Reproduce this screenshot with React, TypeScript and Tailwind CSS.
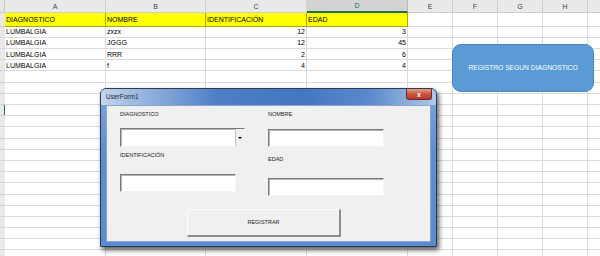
import React from "react";

const cols = [
  { key: "A", w: "w-[101px]" },
  { key: "B", w: "w-[100px]" },
  { key: "C", w: "w-[101px]" },
  { key: "D", w: "w-[101px]" },
  { key: "E", w: "w-[45px]" },
  { key: "F", w: "w-[45px]" },
  { key: "G", w: "w-[45px]" },
  { key: "H", w: "w-[45px]" },
  { key: "I", w: "w-[45px]" },
];

const data = [
  ["LUMBALGIA", "zxzx", "12", "3"],
  ["LUMBALGIA", "JGGG", "12", "45"],
  ["LUMBALGIA", "RRR", "2", "6"],
  ["LUMBALGIA", "f", "4", "4"],
];

const headings = ["DIAGNOSTICO", "NOMBRE", "IDENTIFICACIÓN", "EDAD"];

const RowHead = ({ n, h, active }: { n: number; h: string; active?: boolean }) => (
  <div className={`${h} relative w-[5px] shrink-0 overflow-hidden border-b border-[#d4d4d4] bg-[#e9e9e9]`}>
    <div className="-ml-[21px] flex h-full w-[26px] items-center justify-center text-[7px] leading-none text-[#3b4a66]">
      {n}
    </div>
    {active && <div className="absolute right-0 top-0 h-full w-[1px] bg-[#217346]" />}
  </div>
);

const Sheet = () => {
  const emptyRows = Array.from({ length: 18 }, (_, i) => i + 6);

  return (
    <div className="flex flex-col">
      {/* column headers */}
      <div className="flex h-[13px]">
        <div className="w-[5px] shrink-0 border-b border-r border-[#c8c8c8] bg-[#e6e6e6]" />
        {cols.map((c) => (
          <div
            key={c.key}
            className={`${c.w} flex shrink-0 items-center justify-center border-r text-[7px] leading-none ${
              c.key === "D"
                ? "border-b-2 border-b-[#217346] border-r-[#bdbdbd] bg-[#d3d3d3] text-[#217346]"
                : "border-b border-[#cfcfcf] bg-[#e9e9e9] text-[#444]"
            }`}
          >
            {c.key}
          </div>
        ))}
      </div>

      {/* heading row */}
      <div className="flex h-[13.7px]">
        <RowHead n={1} h="h-[13.7px]" />
        {cols.map((c, i) => (
          <div
            key={c.key}
            className={`${c.w} flex shrink-0 items-center overflow-hidden whitespace-nowrap border-b border-r pl-[1px] text-[7px] leading-none text-black ${
              i < 4 ? "border-[#a8a800] bg-[#ffff00]" : "border-[#dadada]"
            }`}
          >
            {headings[i] ?? ""}
          </div>
        ))}
      </div>

      {data.map((row, r) => (
        <div key={r} className="flex h-[11.2px]">
          <RowHead n={r + 2} h="h-[11.2px]" />
          {cols.map((c, i) => (
            <div
              key={c.key}
              className={`${c.w} flex shrink-0 items-center overflow-visible whitespace-nowrap border-b border-r border-[#dadada] px-[1px] text-[7px] leading-none text-black ${
                i === 2 || i === 3 ? "justify-end" : "justify-start"
              }`}
            >
              {row[i] ?? ""}
            </div>
          ))}
        </div>
      ))}

      {emptyRows.map((n) => (
        <div key={n} className="flex h-[11.2px]">
          <RowHead n={n} h="h-[11.2px]" active={n === 9} />
          {cols.map((c) => (
            <div key={c.key} className={`${c.w} shrink-0 border-b border-r border-[#dadada]`} />
          ))}
        </div>
      ))}
    </div>
  );
};

const Label = ({ children, className }: { children: React.ReactNode; className?: string }) => (
  <div className={`h-[7px] text-[5.5px] leading-[7px] text-[#222] ${className ?? ""}`}>{children}</div>
);

const sunken =
  "border border-t-[#7a7a7a] border-l-[#7a7a7a] border-r-[#f4f4f4] border-b-[#f4f4f4] bg-white shadow-[inset_1px_1px_0_#b4b4b4]";

const UserForm = () => (
  <div className="absolute left-[100px] top-[88px] flex h-[159px] w-[337px] flex-col rounded-t-[6px] border border-[#2c3a52] bg-[linear-gradient(180deg,#7ea6dc_0%,#5d8dd2_40%,#5a8bd1_100%)] shadow-[2px_3px_5px_rgba(0,0,0,0.65)]">
    {/* title bar */}
    <div className="flex h-[16px] shrink-0 items-center rounded-t-[5px] bg-[linear-gradient(90deg,#c5d5eb_0%,#97b5df_12%,#4d7ec6_35%,#4476c2_60%,#5a89cc_80%,#b1c9ea_100%)] pl-[5px] pr-[4px]">
      <span className="text-[6.5px] leading-none text-[#1d2633]">UserForm1</span>
      <div className="ml-auto flex h-[11px] w-[26px] items-center justify-center self-start rounded-b-[3px] border border-t-0 border-[#6b2a2a] bg-[linear-gradient(180deg,#e4a08e_0%,#c8543f_50%,#b73a28_100%)]">
        <span className="text-[7px] font-bold leading-none text-white">x</span>
      </div>
    </div>

    {/* client area */}
    <div className="mx-[5px] mb-[4px] flex flex-1 flex-col border border-[#8aa6cf] bg-[#f0f0f0]">
      <div className="flex pl-[13px]">
        <div className="flex w-[125px] flex-col">
          <Label className="mt-[5px]">DIAGNOSTICO</Label>
          <div className={`mt-[10px] flex h-[19px] ${sunken}`}>
            <div className="ml-auto flex h-full w-[9px] items-center justify-center border-l border-[#c0c0c0] bg-[#f0f0f0]">
              <div className="h-0 w-0 border-x-[2px] border-t-[2.5px] border-x-transparent border-t-black" />
            </div>
          </div>
          <Label className="mt-[5px]">IDENTIFICACIÓN</Label>
          <div className={`mt-[15px] h-[18px] w-[116px] ${sunken}`} />
        </div>
        <div className="ml-[23px] flex w-[116px] flex-col">
          <Label className="mt-[5px]">NOMBRE</Label>
          <div className={`mt-[11px] h-[18px] ${sunken}`} />
          <Label className="mt-[9px]">EDAD</Label>
          <div className={`mt-[15px] h-[18px] ${sunken}`} />
        </div>
      </div>
      <button className="ml-[80px] mt-[13px] flex h-[28px] w-[154px] items-center justify-center border border-b-2 border-r-2 border-t-[#fdfdfd] border-l-[#fdfdfd] border-b-[#8c8c8c] border-r-[#8c8c8c] bg-[#f0f0f0] text-[5.5px] leading-none text-[#222]">
        REGISTRAR
      </button>
    </div>
  </div>
);

export default function App() {
  return (
    <div
      className="relative h-[256px] w-[600px] overflow-hidden bg-white"
      style={{ fontFamily: '"Liberation Sans", Arial, sans-serif' }}
    >
      <Sheet />

      <div className="absolute left-[452px] top-[44px] flex h-[48px] w-[142px] items-center justify-center rounded-[9px] border border-[#4a86c2] bg-[#5b9bd5] text-[6.7px] leading-none text-white">
        REGISTRO SEGUN DIAGNOSTICO
      </div>

      <UserForm />
    </div>
  );
}
